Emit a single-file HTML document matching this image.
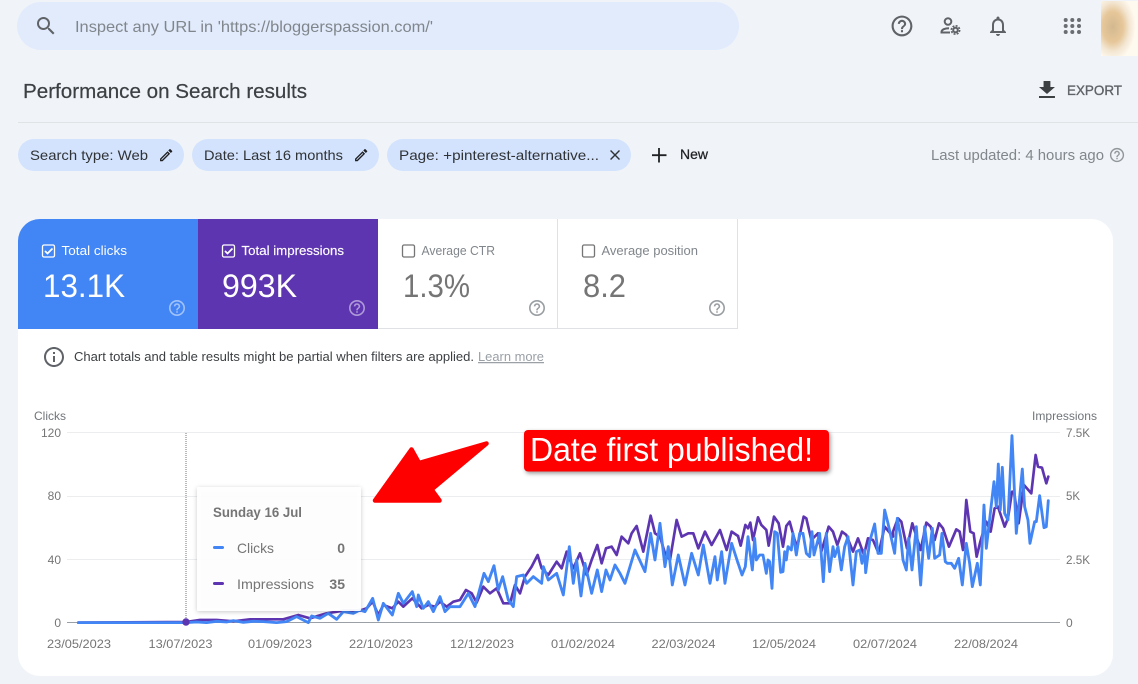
<!DOCTYPE html>
<html>
<head>
<meta charset="utf-8">
<style>
html,body{margin:0;padding:0;background:#f0f4f9;width:1138px;height:684px;overflow:hidden}
svg{display:block}
text{font-family:"Liberation Sans",sans-serif}
</style>
</head>
<body>
<svg width="1138" height="684" viewBox="0 0 1138 684" xmlns="http://www.w3.org/2000/svg">
<defs>
<path id="help" d="M11 18h2v-2h-2v2zm1-16C6.48 2 2 6.48 2 12s4.48 10 10 10 10-4.48 10-10S17.52 2 12 2zm0 18c-4.41 0-8-3.59-8-8s3.59-8 8-8 8 3.59 8 8-3.59 8-8 8zm0-14c-2.21 0-4 1.79-4 4h2c0-1.1.9-2 2-2s2 .9 2 2c0 2-3 1.75-3 5h2c0-2.25 3-2.5 3-5 0-2.21-1.79-4-4-4z"/>
<path id="edit" d="M3 17.25V21h3.75L17.81 9.94l-3.75-3.75L3 17.25zM5.92 19H5v-.92l9.06-9.06.92.92L5.92 19zM20.71 5.63l-2.34-2.34c-.2-.2-.45-.29-.71-.29s-.51.1-.7.29l-1.83 1.83 3.75 3.75 1.83-1.83c.39-.39.39-1.02 0-1.41z"/>
<radialGradient id="av" cx="0.32" cy="0.47" r="0.62">
<stop offset="0" stop-color="#d3b88f"/><stop offset="0.45" stop-color="#e6c79a"/><stop offset="0.72" stop-color="#f3e6d2"/><stop offset="1" stop-color="#fffaf0"/>
</radialGradient>
<filter id="sh" x="-10%" y="-10%" width="120%" height="125%"><feDropShadow dx="0" dy="1" stdDeviation="2.5" flood-color="#000" flood-opacity=".22"/></filter>
<filter id="sh2" x="-5%" y="-20%" width="110%" height="150%"><feDropShadow dx="1.5" dy="2" stdDeviation="2" flood-color="#000" flood-opacity=".4"/></filter>
</defs>

<!-- top bar -->
<rect x="17" y="2" width="722" height="48" rx="24" fill="#e1ebfc"/>
<path d="M15.5 14h-.79l-.28-.27A6.471 6.471 0 0 0 16 9.5 6.5 6.5 0 1 0 9.5 16c1.61 0 3.09-.59 4.23-1.57l.27.28v.79l5 4.99L20.49 19l-4.99-5zm-6 0C7.01 14 5 11.99 5 9.5S7.01 5 9.5 5 14 7.01 14 9.5 11.99 14 9.5 14z" transform="translate(34,14)" fill="#5f6368"/>
<text x="75" y="32" font-size="16" fill="#80868b" textLength="358" lengthAdjust="spacingAndGlyphs">Inspect any URL in 'https://bloggerspassion.com/'</text>

<use href="#help" transform="translate(889.5,13.5) scale(1.04)" fill="#5f6368"/>
<g fill="none" stroke="#5f6368" stroke-width="2">
<circle cx="948" cy="21.5" r="3.3"/>
<path d="M941.5 33.5v-1.5c0-2.400 3.500-3.800 7.500-3.800"/>
<path d="M941 32.500h9"/>
<circle cx="955.500" cy="30" r="2.300"/>
<circle cx="955.500" cy="30" r="4.200" stroke-width="1.600" stroke-dasharray="2 1.300"/>
</g>
<path d="M12 22c1.100 0 2-.9 2-2h-4c0 1.100.9 2 2 2zm6-6v-5c0-3.070-1.630-5.640-4.500-6.320V4c0-.83-.67-1.500-1.500-1.500s-1.500.67-1.500 1.500v.68C7.640 5.360 6 7.920 6 11v5l-2 2v1h16v-1l-2-2zm-2 1H8v-6c0-2.480 1.510-4.500 4-4.500s4 2.020 4 4.500v6z" transform="translate(986,14)" fill="#5f6368"/>
<g fill="#6a6e72">
<circle cx="1065.700" cy="20" r="2"/><circle cx="1072.300" cy="20" r="2"/><circle cx="1079" cy="20" r="2"/>
<circle cx="1065.700" cy="26" r="2"/><circle cx="1072.300" cy="26" r="2"/><circle cx="1079" cy="26" r="2"/>
<circle cx="1065.700" cy="32" r="2"/><circle cx="1072.300" cy="32" r="2"/><circle cx="1079" cy="32" r="2"/>
</g>
<rect x="1101" y="1" width="37" height="55" fill="url(#av)"/>

<!-- title -->
<text x="23" y="98" font-size="20" fill="#3c4043" stroke="#3c4043" stroke-width=".2" textLength="284" lengthAdjust="spacingAndGlyphs">Performance on Search results</text>
<path d="M19 9h-4V3H9v6H5l7 7 7-7zM5 18v2h14v-2H5z" transform="translate(1033.300,78) scale(1.14,1)" fill="#3c4043"/>
<text x="1067" y="95" font-size="14" fill="#5f6368" stroke="#5f6368" stroke-width=".35" textLength="55" lengthAdjust="spacingAndGlyphs">EXPORT</text>
<rect x="18" y="122" width="1120" height="1" fill="#dfe3e6"/>

<!-- chips -->
<rect x="18" y="139" width="166" height="32" rx="16" fill="#d3e3fd"/>
<rect x="192" y="139" width="187" height="32" rx="16" fill="#d3e3fd"/>
<rect x="387" y="139" width="244" height="32" rx="16" fill="#d3e3fd"/>
<text x="30" y="160" font-size="14" fill="#303336" textLength="118" lengthAdjust="spacingAndGlyphs">Search type: Web</text>
<use href="#edit" transform="translate(158,147) scale(.68)" fill="#202124"/>
<text x="204" y="160" font-size="14" fill="#303336" textLength="139" lengthAdjust="spacingAndGlyphs">Date: Last 16 months</text>
<use href="#edit" transform="translate(353,147) scale(.68)" fill="#202124"/>
<text x="399" y="160" font-size="14" fill="#303336" textLength="200" lengthAdjust="spacingAndGlyphs">Page: +pinterest-alternative...</text>
<path d="M19 6.410L17.590 5 12 10.590 6.410 5 5 6.410 10.590 12 5 17.590 6.410 19 12 13.410 17.590 19 19 17.590 13.410 12z" transform="translate(606.500,146.500) scale(.71)" fill="#303336"/>
<path d="M659 148v14.500M652 155.200h14.500" stroke="#202124" stroke-width="1.800" fill="none"/>
<text x="680" y="159" font-size="14" fill="#202124" stroke="#202124" stroke-width=".25" textLength="28" lengthAdjust="spacingAndGlyphs">New</text>
<text x="931" y="160" font-size="14.500" fill="#80868b" textLength="173" lengthAdjust="spacingAndGlyphs">Last updated: 4 hours ago</text>
<use href="#help" transform="translate(1108.500,146.500) scale(.71)" fill="#80868b" fill-opacity=".85"/>

<!-- card -->
<rect x="18" y="219" width="1095" height="457" rx="22" fill="#fff"/>
<path d="M18 329V241a22 22 0 0 1 22-22H198V329z" fill="#4285f4"/>
<rect x="198" y="219" width="180" height="110" fill="#5e35b1"/>
<rect x="557" y="219" width="1" height="110" fill="#dfe1e5"/>
<rect x="737" y="219" width="1" height="110" fill="#dfe1e5"/>
<rect x="378" y="328" width="360" height="1" fill="#dfe1e5"/>

<g fill="none" stroke="#fff" stroke-width="1.300">
<rect x="42.500" y="245" width="12" height="12" rx="1.500"/>
<path d="M45 251l2.500 2.500 5-5" stroke-width="1.700"/>
<rect x="222.500" y="245" width="12" height="12" rx="1.500"/>
<path d="M225 251l2.500 2.500 5-5" stroke-width="1.700"/>
</g>
<g fill="none" stroke="#757575" stroke-width="1.300">
<rect x="402.500" y="245" width="12" height="12" rx="1.500"/>
<rect x="582.500" y="245" width="12" height="12" rx="1.500"/>
</g>
<text x="61.500" y="255" font-size="13" fill="#fff" textLength="65.500" lengthAdjust="spacingAndGlyphs">Total clicks</text>
<text x="241.500" y="255" font-size="13" fill="#fff" stroke="#fff" stroke-width=".15" textLength="102.500" lengthAdjust="spacingAndGlyphs">Total impressions</text>
<text x="421.500" y="255" font-size="13" fill="#80868b" textLength="73.500" lengthAdjust="spacingAndGlyphs">Average CTR</text>
<text x="601.500" y="255" font-size="13" fill="#80868b" textLength="96.500" lengthAdjust="spacingAndGlyphs">Average position</text>

<text x="43" y="297" font-size="32" fill="#fff" textLength="82" lengthAdjust="spacingAndGlyphs">13.1K</text>
<text x="222" y="297" font-size="32" fill="#fff" textLength="75" lengthAdjust="spacingAndGlyphs">993K</text>
<text x="403" y="297" font-size="32" fill="#757575" textLength="67" lengthAdjust="spacingAndGlyphs">1.3%</text>
<text x="583" y="297" font-size="32" fill="#757575" textLength="43" lengthAdjust="spacingAndGlyphs">8.2</text>

<use href="#help" transform="translate(167.400,298.400) scale(.8)" fill="#fff" fill-opacity=".5"/>
<use href="#help" transform="translate(347.400,298.400) scale(.8)" fill="#fff" fill-opacity=".5"/>
<use href="#help" transform="translate(527.400,298.400) scale(.8)" fill="#80868b" fill-opacity=".8"/>
<use href="#help" transform="translate(707.400,298.400) scale(.8)" fill="#80868b" fill-opacity=".8"/>

<path d="M11 7h2v2h-2zm0 4h2v6h-2zm1-9C6.480 2 2 6.480 2 12s4.480 10 10 10 10-4.480 10-10S17.520 2 12 2zm0 18c-4.410 0-8-3.590-8-8s3.590-8 8-8 8 3.590 8 8-3.590 8-8 8z" transform="translate(42,345)" fill="#5f6368"/>
<text x="74" y="361" font-size="12.500" fill="#3c4043" textLength="400" lengthAdjust="spacingAndGlyphs">Chart totals and table results might be partial when filters are applied.</text>
<text x="478" y="361" font-size="12.500" fill="#9aa0a6" text-decoration="underline" textLength="66" lengthAdjust="spacingAndGlyphs">Learn more</text>

<!-- chart axes -->
<text x="34" y="420" font-size="12" fill="#70757a" textLength="32" lengthAdjust="spacingAndGlyphs">Clicks</text>
<text x="1032" y="420" font-size="12" fill="#70757a" textLength="65" lengthAdjust="spacingAndGlyphs">Impressions</text>
<g fill="#ebedef">
<rect x="67" y="432" width="993" height="1"/>
<rect x="67" y="496" width="993" height="1"/>
<rect x="67" y="559" width="993" height="1"/>
</g>
<rect x="67" y="622" width="993" height="1" fill="#9aa0a6"/>
<g font-size="12" fill="#757575" text-anchor="end">
<text x="61" y="437">120</text><text x="61" y="500">80</text><text x="61" y="564">40</text><text x="61" y="627">0</text>
</g>
<g font-size="12" fill="#757575">
<text x="1066" y="437" textLength="24" lengthAdjust="spacingAndGlyphs">7.5K</text><text x="1066" y="500" textLength="14" lengthAdjust="spacingAndGlyphs">5K</text><text x="1066" y="564" textLength="24" lengthAdjust="spacingAndGlyphs">2.5K</text><text x="1066" y="627">0</text>
</g>
<g font-size="12" fill="#757575">
<text x="47" y="648" textLength="64" lengthAdjust="spacingAndGlyphs">23/05/2023</text>
<text x="148.500" y="648" textLength="64" lengthAdjust="spacingAndGlyphs">13/07/2023</text>
<text x="248" y="648" textLength="64" lengthAdjust="spacingAndGlyphs">01/09/2023</text>
<text x="349" y="648" textLength="64" lengthAdjust="spacingAndGlyphs">22/10/2023</text>
<text x="450" y="648" textLength="64" lengthAdjust="spacingAndGlyphs">12/12/2023</text>
<text x="551" y="648" textLength="64" lengthAdjust="spacingAndGlyphs">01/02/2024</text>
<text x="651.500" y="648" textLength="64" lengthAdjust="spacingAndGlyphs">22/03/2024</text>
<text x="752" y="648" textLength="64" lengthAdjust="spacingAndGlyphs">12/05/2024</text>
<text x="853" y="648" textLength="64" lengthAdjust="spacingAndGlyphs">02/07/2024</text>
<text x="954" y="648" textLength="64" lengthAdjust="spacingAndGlyphs">22/08/2024</text>
</g>
<path d="M186 433V622" stroke="#70757a" stroke-width="1" stroke-dasharray="1 1"/>

<!-- chart lines: purple -->
<g fill="none" stroke="#5e35b1" stroke-width="8" stroke-linejoin="round" stroke-linecap="round">
<polyline transform="translate(0,400) scale(.3333)" points="235,668 559,666 600,660 650,660 700,664 750,658 800,658 850,658 895,645 930,655 980,640 1030,632 1080,632"/>
<polyline transform="translate(360,420) scale(.3333)" points="0,572 20,565 38,545 55,585 70,555 97,565 115,545 130,560 157,535 185,565 205,555 225,560 240,545 260,560 280,545 300,540 318,510 335,520 350,548 370,500 390,520 410,505 430,550 450,550 465,495 480,520 495,470 515,440 533,405 545,445 565,465 590,425 605,445 620,395 640,445 660,400 680,465 695,420 712,375 725,430 738,385 755,380 770,405 785,350 805,370 815,340 830,318 850,395 872,287 885,340 900,350 915,400 930,420 950,300 965,350 985,340 1000,340 1015,385 1035,335 1055,375 1080,330 1100,390 1115,335 1134,348"/>
<polyline transform="translate(738,400) scale(.3333)" points="0,408 8,437 22,375 30,385 37,368 45,420 60,352 70,375 85,390 92,437 108,350 122,370 135,440 145,378 155,365 170,420 178,440 197,350 205,355 220,420 240,400 250,455 272,380 285,395 298,435 312,395 325,405 345,455 360,415 378,465 390,415 405,420 422,460 440,380 465,410 465,395 480,355 490,365 507,445 523,370 548,450 565,368 578,380 590,420 603,370 615,385 633,440 655,388 665,395 675,450 685,300 697,395 707,400 716,470 727,425 745,365 758,395 770,325 780,320 800,380 810,355 822,275 828,275 842,370 858,255 880,280 893,165 900,200 912,203 925,250 931,230"/>
</g>
<!-- chart lines: blue -->
<g fill="none" stroke="#4285f4" stroke-width="8.500" stroke-linejoin="round" stroke-linecap="round">
<polyline transform="translate(0,400) scale(.3333)" points="235,668 559,668 590,666 620,668 650,664 680,666 700,662 730,667 760,664 790,665 830,668 860,665 890,650 925,668 935,648 960,655 985,640 1010,658 1030,635 1060,640 1080,630"/>
<polyline transform="translate(360,420) scale(.3333)" points="0,570 15,575 38,535 55,600 70,550 97,585 115,520 130,550 157,515 170,560 175,525 190,565 205,545 220,575 240,530 255,575 270,560 300,560 325,520 345,560 372,460 385,485 402,437 415,510 428,470 445,540 460,560 470,470 490,465 500,490 520,470 545,490 550,440 565,480 590,460 610,525 628,380 640,490 650,420 663,528 675,430 695,520 712,450 725,515 738,450 750,480 765,435 780,460 795,490 825,390 855,455 872,340 885,420 900,310 915,440 925,380 937,495 955,405 975,495 995,400 1015,465 1030,375 1050,490 1065,410 1072,480 1085,395 1095,490 1115,370 1134,429"/>
<polyline transform="translate(738,400) scale(.3333)" points="0,489 12,525 22,500 30,410 43,510 50,415 55,480 65,465 75,465 85,520 90,480 95,485 102,565 110,395 118,400 128,517 135,515 140,455 145,480 150,440 160,450 165,400 175,465 185,400 195,400 205,460 215,470 222,395 228,465 245,400 256,545 265,400 275,515 285,440 290,470 300,440 310,510 320,440 330,410 345,555 355,455 365,450 372,490 380,450 383,518 395,425 410,372 420,460 430,460 440,330 450,370 470,460 478,355 488,410 495,480 505,510 512,415 522,510 535,380 548,555 560,380 572,475 583,385 590,475 605,465 612,400 622,485 628,490 640,490 650,505 662,475 673,555 685,430 695,490 703,560 718,490 727,555 738,315 745,445 768,245 775,320 781,192 787,330 793,202 800,340 810,360 822,107 835,400 853,207 860,320 870,360 876,430 890,365 895,365 905,287 918,383 925,380 931,302"/>
</g>
<circle cx="186" cy="622" r="3.700" fill="#5e35b1"/>

<!-- tooltip -->
<rect x="197" y="487" width="164" height="124" rx="1.500" fill="#fff" fill-opacity=".93" filter="url(#sh)"/>
<text x="213" y="517" font-size="14" font-weight="700" fill="#757575" textLength="89" lengthAdjust="spacingAndGlyphs">Sunday 16 Jul</text>
<rect x="213" y="546" width="11" height="3" rx="1.500" fill="#4285f4"/>
<rect x="213" y="582" width="11" height="3" rx="1.500" fill="#5e35b1"/>
<text x="237" y="553" font-size="14" fill="#757575" textLength="37" lengthAdjust="spacingAndGlyphs">Clicks</text>
<text x="237" y="589" font-size="14" fill="#757575" textLength="77" lengthAdjust="spacingAndGlyphs">Impressions</text>
<text x="345" y="553" font-size="14" font-weight="700" fill="#757575" text-anchor="end">0</text>
<text x="345" y="589" font-size="14" font-weight="700" fill="#757575" text-anchor="end">35</text>

<!-- annotation arrow -->
<path d="M375 500.500L411.500 449.500L419 463L486.500 443.500L431.500 489.500L439.500 500.500Z" fill="#f00" stroke="#f00" stroke-width="4.500" stroke-linejoin="round"/>
<rect x="524" y="430" width="305" height="41.500" rx="4" fill="#f00" filter="url(#sh2)"/>
<text x="530" y="461" font-size="33" fill="#fff" textLength="283" lengthAdjust="spacingAndGlyphs">Date first published!</text>
</svg>
</body>
</html>
